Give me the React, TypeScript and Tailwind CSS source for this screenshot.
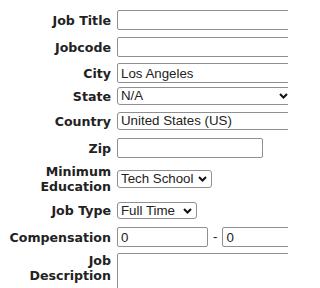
const Chevron = () => (
  <svg width="9" height="6" viewBox="0 0 9 6" className="absolute right-[4px] top-1/2 -translate-y-1/2 pointer-events-none">
    <path d="M1 1l3.5 3.5L8 1" fill="none" stroke="#111" strokeWidth="2" />
  </svg>
);

const inputCls =
  "h-[20px] border border-[#8f8f8f] rounded-[2px] bg-white px-[3px] text-[13.3px] text-[#222] outline-none";

const Select = ({ value, w, h = "h-[18px]" }: { value: string; w: string; h?: string }) => (
  <div className={`relative ${w} ${h} shrink-0 border border-[#8f8f8f] rounded-[3px] bg-white flex items-center pl-[3px] text-[13.3px] text-[#222] leading-none`}>
    <span className="whitespace-nowrap">{value}</span>
    <Chevron />
  </div>
);

const Label = ({ children }: { children: React.ReactNode }) => (
  <div className="w-[111px] shrink-0 text-right font-bold text-[12.6px] leading-[15px] text-[#222]">{children}</div>
);

const arial = { fontFamily: '"Liberation Sans", Arial, sans-serif' };

export default function App() {
  return (
    <div className="w-[288px] h-[288px] overflow-hidden bg-white pt-[10px]" style={arial}>
      <div className="flex flex-col" style={{ fontFamily: '"DejaVu Sans", Verdana, sans-serif' }}>
        <div className="flex items-center gap-[6px]">
          <Label>Job Title</Label>
          <input className={`${inputCls} w-[200px] shrink-0`} style={arial} />
        </div>
        <div className="flex items-center gap-[6px] mt-[7px]">
          <Label>Jobcode</Label>
          <input className={`${inputCls} w-[200px] shrink-0`} style={arial} />
        </div>
        <div className="flex items-center gap-[6px] mt-[6px]">
          <Label>City</Label>
          <input className={`${inputCls} w-[200px] shrink-0`} defaultValue="Los Angeles" style={arial} />
        </div>
        <div className="flex items-center gap-[6px] mt-[4px]">
          <Label>State</Label>
          <div style={arial}>
            <Select value="N/A" w="w-[176px]" />
          </div>
        </div>
        <div className="flex items-center gap-[6px] mt-[7px]">
          <Label>Country</Label>
          <div style={arial}>
            <div className="w-[200px] h-[18px] border border-[#8f8f8f] rounded-[3px] bg-white flex items-center pl-[3px] text-[13.3px] text-[#222] leading-none whitespace-nowrap overflow-hidden">
              United States (US)
            </div>
          </div>
        </div>
        <div className="flex items-center gap-[6px] mt-[8px]">
          <Label>Zip</Label>
          <input className={`${inputCls} w-[146px] shrink-0`} style={arial} />
        </div>
        <div className="flex items-center gap-[6px] mt-[6px]">
          <Label>
            Minimum
            <br />
            Education
          </Label>
          <div style={arial}>
            <Select value="Tech School" w="w-[95px]" />
          </div>
        </div>
        <div className="flex items-center gap-[6px] mt-[8px]">
          <Label>Job Type</Label>
          <div style={arial}>
            <Select value="Full Time" w="w-[80px]" h="h-[17px]" />
          </div>
        </div>
        <div className="flex items-center gap-[6px] mt-[8px]">
          <Label>Compensation</Label>
          <div className="flex items-center" style={arial}>
            <input className={`${inputCls} w-[91px] shrink-0`} defaultValue="0" />
            <span className="px-[5px] text-[13.3px] text-[#222]">-</span>
            <input className={`${inputCls} w-[90px] shrink-0`} defaultValue="0" />
          </div>
        </div>
        <div className="flex items-start gap-[6px] mt-[6px]">
          <Label>
            Job
            <br />
            Description
          </Label>
          <textarea className="w-[200px] h-[60px] shrink-0 border border-[#8f8f8f] rounded-[2px] bg-white resize-none outline-none" />
        </div>
      </div>
    </div>
  );
}
